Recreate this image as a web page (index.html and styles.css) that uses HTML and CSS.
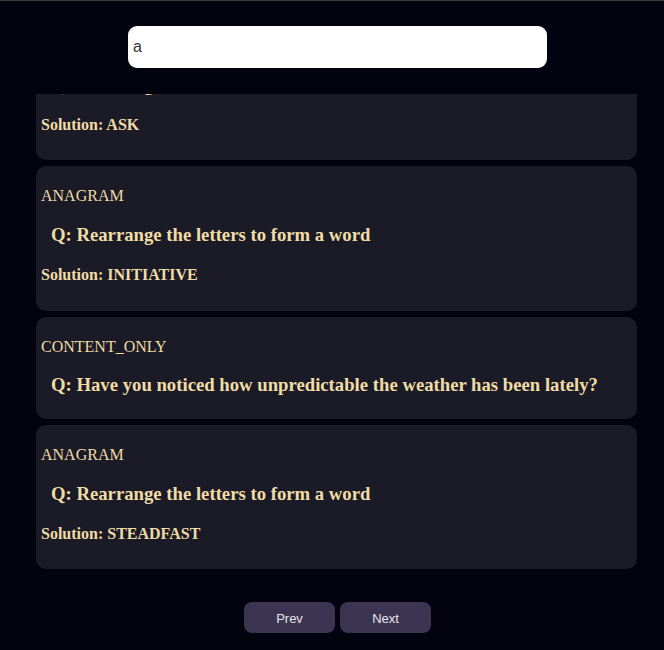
FILE: index.html
```html
<!DOCTYPE html>
<html>
<head>
<meta charset="utf-8">
<link rel="stylesheet" href="styles.css">
</head>
<body>
<header class="top">
  <input class="search" type="text" value="a">
</header>
<main class="viewport">
  <div class="list">
    <div class="card">
      <p class="type">ANAGRAM</p>
      <h3 class="question">Q: Rearrange the letters to form a word</h3>
      <h4 class="solution">Solution: ASK</h4>
    </div>
    <div class="card">
      <p class="type">ANAGRAM</p>
      <h3 class="question">Q: Rearrange the letters to form a word</h3>
      <h4 class="solution">Solution: INITIATIVE</h4>
    </div>
    <div class="card">
      <p class="type">CONTENT_ONLY</p>
      <h3 class="question">Q: Have you noticed how unpredictable the weather has been lately?</h3>
    </div>
    <div class="card">
      <p class="type">ANAGRAM</p>
      <h3 class="question">Q: Rearrange the letters to form a word</h3>
      <h4 class="solution">Solution: STEADFAST</h4>
    </div>
  </div>
</main>
<nav class="pager">
  <button class="btn">Prev</button>
  <button class="btn">Next</button>
</nav>
</body>
</html>
```
FILE: styles.css
```css
html, body {
  margin: 0;
  padding: 0;
  background: #03020f;
  height: 100%;
  overflow: hidden;
}
body {
  font-family: "Liberation Serif", serif;
  color: #f0dca5;
}
.top {
  height: 94px;
  box-sizing: border-box;
  border-top: 1px solid #3d3d42;
  padding: 25px 0 0 128px;
}
.search {
  display: block;
  width: 419px;
  height: 42px;
  box-sizing: border-box;
  border: none;
  border-radius: 9px;
  background: #fff;
  padding: 0 5px;
  font-family: "Liberation Sans", sans-serif;
  font-size: 16px;
  color: #333;
  outline: none;
}
.viewport {
  height: 475px;
  overflow: hidden;
  padding-left: 36px;
}
.list {
  width: 601px;
  margin-top: -78px;
  display: flex;
  flex-direction: column;
  gap: 6px;
}
.card {
  background: #1b1a27;
  border-radius: 10px;
  padding: 5px;
}
.type {
  margin: 16px 0;
  font-size: 16px;
  line-height: 18px;
}
.question {
  margin: 18.72px 0 18.72px 10px;
  font-size: 18.72px;
  line-height: 21px;
  font-weight: bold;
}
.solution {
  margin: 21.28px 0;
  font-size: 16px;
  line-height: 18px;
  font-weight: bold;
}
.pager {
  display: flex;
  justify-content: center;
  gap: 5px;
  padding-top: 33px;
  padding-left: 11px;
}
.btn {
  width: 91px;
  height: 31px;
  padding: 1px 0 0;
  border: none;
  border-radius: 8px;
  background: #3b3551;
  color: #e6e3ee;
  font-family: "Liberation Sans", sans-serif;
  font-size: 13px;
}
```
